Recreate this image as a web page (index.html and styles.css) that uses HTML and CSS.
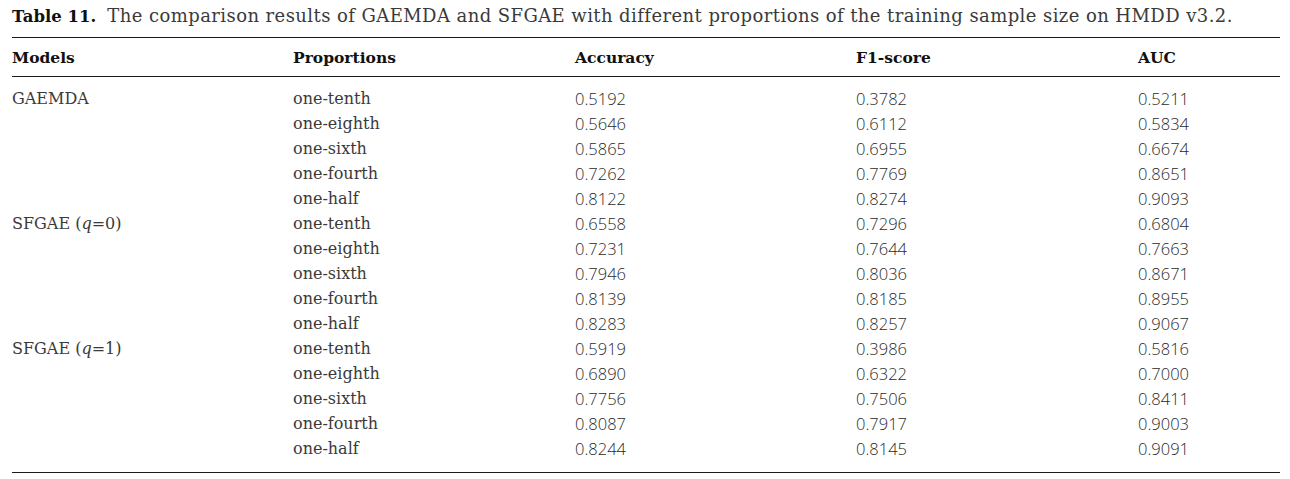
FILE: index.html
```html
<!DOCTYPE html>
<html>
<head>
<meta charset="utf-8">
<link rel="stylesheet" href="styles.css">
</head>
<body>
<div class="wrap">
  <p class="caption"><span class="label">Table 11.</span> The comparison results of GAEMDA and SFGAE with different proportions of the training sample size on HMDD v3.2.</p>
  <div class="table">
    <div class="row head">
      <div>Models</div><div>Proportions</div><div>Accuracy</div><div>F1-score</div><div>AUC</div>
    </div>
    <div class="body">
      <div class="row"><div class="txt">GAEMDA</div><div class="txt">one-tenth</div><div class="num">0.5192</div><div class="num">0.3782</div><div class="num">0.5211</div></div>
      <div class="row"><div></div><div class="txt">one-eighth</div><div class="num">0.5646</div><div class="num">0.6112</div><div class="num">0.5834</div></div>
      <div class="row"><div></div><div class="txt">one-sixth</div><div class="num">0.5865</div><div class="num">0.6955</div><div class="num">0.6674</div></div>
      <div class="row"><div></div><div class="txt">one-fourth</div><div class="num">0.7262</div><div class="num">0.7769</div><div class="num">0.8651</div></div>
      <div class="row"><div></div><div class="txt">one-half</div><div class="num">0.8122</div><div class="num">0.8274</div><div class="num">0.9093</div></div>
      <div class="row"><div class="txt">SFGAE (<i>q</i>=0)</div><div class="txt">one-tenth</div><div class="num">0.6558</div><div class="num">0.7296</div><div class="num">0.6804</div></div>
      <div class="row"><div></div><div class="txt">one-eighth</div><div class="num">0.7231</div><div class="num">0.7644</div><div class="num">0.7663</div></div>
      <div class="row"><div></div><div class="txt">one-sixth</div><div class="num">0.7946</div><div class="num">0.8036</div><div class="num">0.8671</div></div>
      <div class="row"><div></div><div class="txt">one-fourth</div><div class="num">0.8139</div><div class="num">0.8185</div><div class="num">0.8955</div></div>
      <div class="row"><div></div><div class="txt">one-half</div><div class="num">0.8283</div><div class="num">0.8257</div><div class="num">0.9067</div></div>
      <div class="row"><div class="txt">SFGAE (<i>q</i>=1)</div><div class="txt">one-tenth</div><div class="num">0.5919</div><div class="num">0.3986</div><div class="num">0.5816</div></div>
      <div class="row"><div></div><div class="txt">one-eighth</div><div class="num">0.6890</div><div class="num">0.6322</div><div class="num">0.7000</div></div>
      <div class="row"><div></div><div class="txt">one-sixth</div><div class="num">0.7756</div><div class="num">0.7506</div><div class="num">0.8411</div></div>
      <div class="row"><div></div><div class="txt">one-fourth</div><div class="num">0.8087</div><div class="num">0.7917</div><div class="num">0.9003</div></div>
      <div class="row"><div></div><div class="txt">one-half</div><div class="num">0.8244</div><div class="num">0.8145</div><div class="num">0.9091</div></div>
    </div>
  </div>
</div>
</body>
</html>
```
FILE: styles.css
```css
html, body {
  margin: 0;
  padding: 0;
  background: #ffffff;
}
.wrap {
  padding: 3px 10px 0 12px;
  color: #2b2b2b;
  font-family: "DejaVu Serif", serif;
}
.caption {
  margin: 0;
  font-size: 18px;
  line-height: 26px;
  color: #3a3a3a;
  letter-spacing: 0.42px;
  white-space: nowrap;
}
.label {
  font-weight: bold;
  font-size: 16.5px;
  color: #111111;
  letter-spacing: 0;
  margin-right: 5px;
}
.table {
  margin-top: 7px;
  border-top: 1.5px solid #1a1a1a;
  border-bottom: 1.5px solid #1a1a1a;
}
.row {
  display: grid;
  grid-template-columns: 281px 282px 281px 282px 1fr;
  height: 25px;
  align-items: center;
  font-size: 16px;
}
.row.head {
  height: 38px;
  font-weight: bold;
  font-size: 15.5px;
  color: #111111;
  border-bottom: 1.5px solid #1a1a1a;
}
.body {
  padding: 9px 0 11px;
}
.txt {
  color: #3a3a3a;
}
.num {
  font-family: "Open Sans", sans-serif;
  font-size: 16.5px;
  font-weight: 300;
  color: #2a2a2a;
}
```
